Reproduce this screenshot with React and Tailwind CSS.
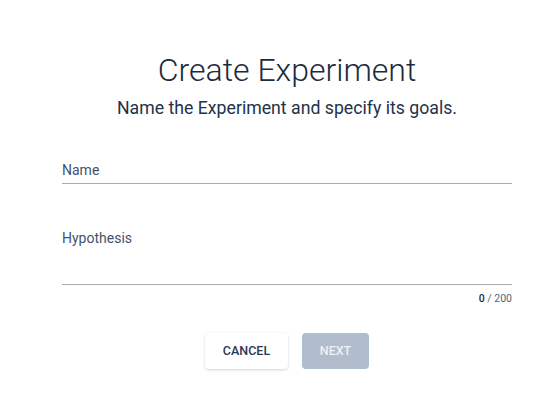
export default function App() {
  return (
    <div className="min-h-[419px] bg-white flex justify-center pl-[16px]" style={{ fontFamily: "Roboto, 'Liberation Sans', sans-serif" }}>
      <div className="w-[450px] flex flex-col pt-[51px]">
        <h1 className="text-center text-[32px] leading-[38px] font-light text-[#1c2b3e]">Create Experiment</h1>
        <p className="text-center text-[17.7px] leading-[24px] mt-[7px] text-[#22324a]">Name the Experiment and specify its goals.</p>
        <div className="mt-[38px] border-b border-[#a9adb3] pb-[1px]">
          <label className="text-[14px] leading-[20px] text-[#43536b]">Name</label>
        </div>
        <div className="mt-[42px] border-b border-[#a9adb3] h-[59px]">
          <label className="text-[14px] leading-[20px] text-[#43536b]">Hypothesis</label>
        </div>
        <div className="text-right text-[10.5px] leading-[14px] mt-[7px] text-[#5a6475]">
          <span className="text-[#1c2b3e] font-medium">0</span> / 200
        </div>
        <div className="flex justify-center gap-[14px] mt-[27px]">
          <button className="h-[36px] w-[83px] rounded-[4px] bg-white text-[12.5px] font-medium text-[#2a3850] shadow-[0_1px_3px_rgba(0,0,0,0.18)]">CANCEL</button>
          <button className="h-[36px] w-[67px] rounded-[4px] bg-[#b1bccc] text-[12.5px] font-medium text-[#eef1f5]">NEXT</button>
        </div>
      </div>
    </div>
  );
}
